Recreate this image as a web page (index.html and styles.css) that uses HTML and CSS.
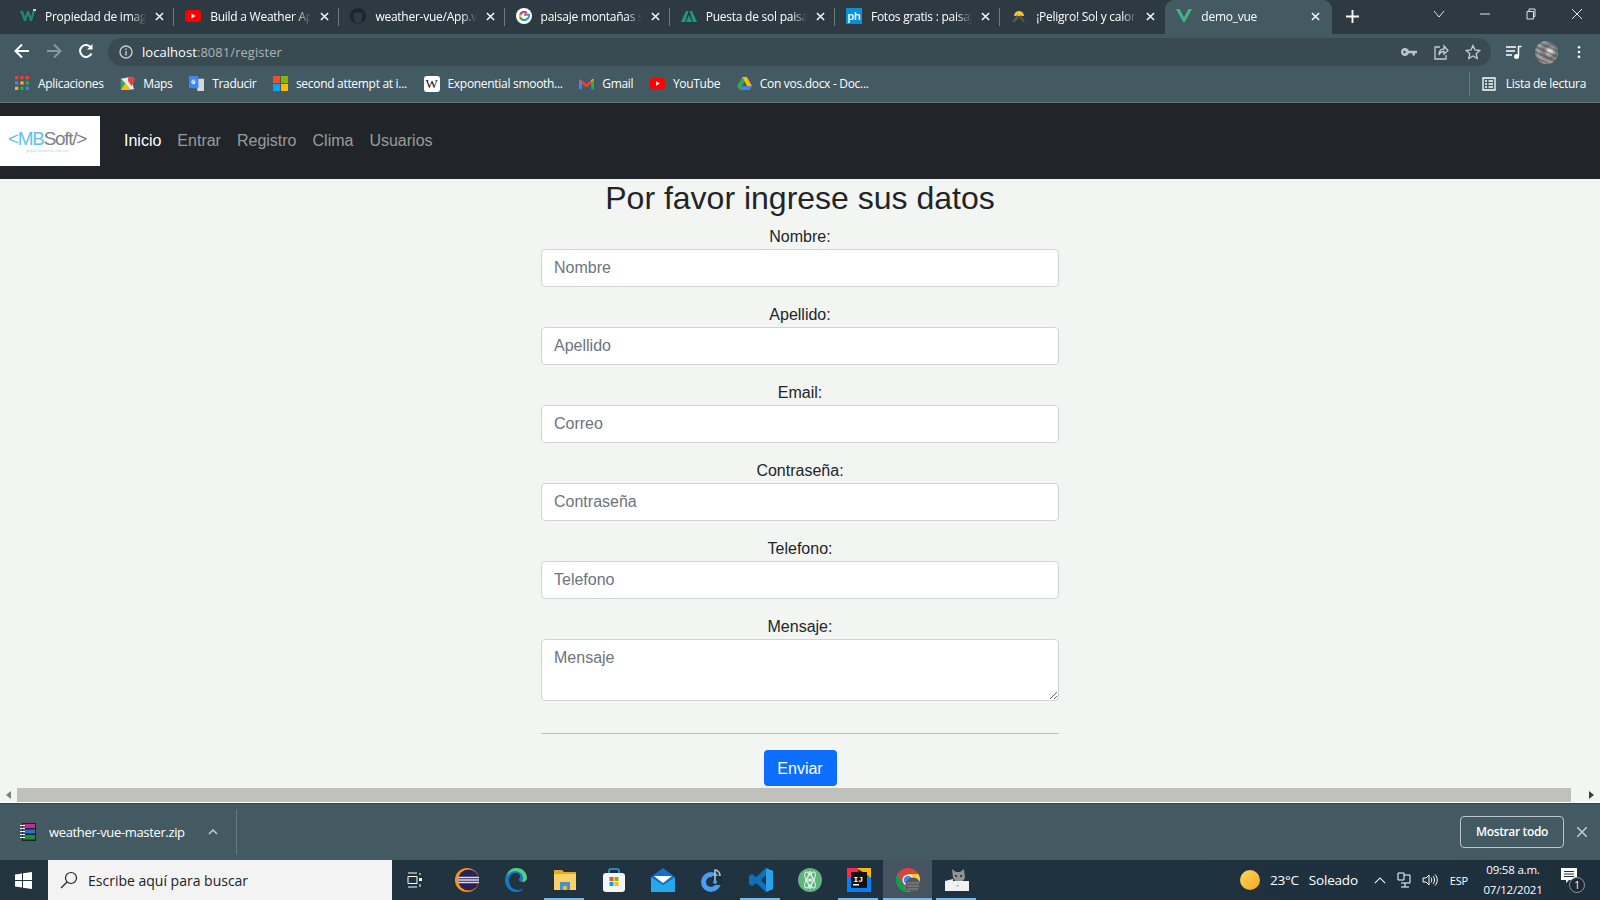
FILE: index.html
```html
<!DOCTYPE html>
<html lang="es">
<head>
    <meta charset="UTF-8">
    <title>demo_vue</title>
    <link rel="stylesheet" href="styles.css">
</head>
<body>
<div class="screen">
    <!-- Tabs -->
    <div class="tabstrip">
        <div class="tab">
            <svg class="favicon" viewBox="0 0 16 16"><path d="M0 3h3l2 6 2-6h2l2 6 1.500-6H15l-3 10H10L8 7l-2 6H4z" fill="#1c8a6e"/><path d="M13 1h3v2h-3z" fill="#ccc"/></svg>
            <span class="tab-title">Propiedad de imagen</span>
            <svg class="tab-close" viewBox="0 0 10 10"><path d="M1 1l8 8M9 1l-8 8"/></svg>
        </div>
        <div class="tab">
            <svg class="favicon" viewBox="0 0 16 16"><rect y="2" width="16" height="12" rx="3" fill="#f00"/><path d="M6.500 5.500v5l4-2.500z" fill="#fff"/></svg>
            <span class="tab-title">Build a Weather App</span>
            <svg class="tab-close" viewBox="0 0 10 10"><path d="M1 1l8 8M9 1l-8 8"/></svg>
        </div>
        <div class="tab">
            <svg class="favicon" viewBox="0 0 16 16"><circle cx="8" cy="8" r="8" fill="#1d262b"/><path d="M5 15v-3L3.500 9.500V6L5 4.500h6L12.500 6v3.500L11 12v3z" fill="#2d3a41"/></svg>
            <span class="tab-title">weather-vue/App.vue</span>
            <svg class="tab-close" viewBox="0 0 10 10"><path d="M1 1l8 8M9 1l-8 8"/></svg>
        </div>
        <div class="tab">
            <svg class="favicon" viewBox="0 0 16 16"><circle cx="8" cy="8" r="8" fill="#fff"/><path d="M8 6.800h5c.3 2.800-1.600 5.200-5 5.200a4 4 0 1 1 2.700-7" fill="none" stroke="#4285f4" stroke-width="2"/><path d="M4.300 6.500A4 4 0 0 1 10.700 5" fill="none" stroke="#ea4335" stroke-width="2"/><path d="M4.300 9.500A4 4 0 0 1 4.300 6.500" fill="none" stroke="#fbbc05" stroke-width="2"/><path d="M4.300 9.500A4 4 0 0 0 10.800 11" fill="none" stroke="#34a853" stroke-width="2"/></svg>
            <span class="tab-title">paisaje montañas sol</span>
            <svg class="tab-close" viewBox="0 0 10 10"><path d="M1 1l8 8M9 1l-8 8"/></svg>
        </div>
        <div class="tab">
            <svg class="favicon" viewBox="0 0 16 16"><path d="M0 14L5 3h2.500L4 14zM5 14l3-7 3 7zM8.500 3H11l5 11h-4z" fill="#1c9a86"/></svg>
            <span class="tab-title">Puesta de sol paisaje</span>
            <svg class="tab-close" viewBox="0 0 10 10"><path d="M1 1l8 8M9 1l-8 8"/></svg>
        </div>
        <div class="tab">
            <span class="favicon fav-ph">ph</span>
            <span class="tab-title">Fotos gratis : paisaje</span>
            <svg class="tab-close" viewBox="0 0 10 10"><path d="M1 1l8 8M9 1l-8 8"/></svg>
        </div>
        <div class="tab">
            <svg class="favicon" viewBox="0 0 16 16"><path d="M3 8a5 5 0 0 1 10 0z" fill="#f2c230"/><path d="M1 14l5-7 2 2 2-2 4 7h-2L9 10l-2 1-3 3z" fill="#5c5648"/></svg>
            <span class="tab-title">¡Peligro! Sol y calor</span>
            <svg class="tab-close" viewBox="0 0 10 10"><path d="M1 1l8 8M9 1l-8 8"/></svg>
        </div>
        <div class="tab tab-active">
            <svg class="favicon" viewBox="0 0 16 16"><path d="M0 1h3.500L8 9.500 12.500 1H16L8 15z" fill="#41b883"/></svg>
            <span class="tab-title">demo_vue</span>
            <svg class="tab-close" viewBox="0 0 10 10"><path d="M1 1l8 8M9 1l-8 8"/></svg>
        </div>
        <svg class="new-tab" viewBox="0 0 14 14"><path d="M7 0v14M0 7h14"/></svg>
        <div class="window-controls">
            <svg viewBox="0 0 12 12"><path d="M1 3l5 6 5-6"/></svg>
            <svg viewBox="0 0 12 12"><path d="M1 6h10"/></svg>
            <svg viewBox="0 0 12 12"><path d="M2 3.500h6.500V11H2zM4 3.500V1h6v7.500H8.500"/></svg>
            <svg viewBox="0 0 12 12"><path d="M1 1l10 10M11 1L1 11"/></svg>
        </div>
    </div>

    <!-- Toolbar -->
    <div class="toolbar">
        <svg class="nav-btn" viewBox="0 0 16 16"><path d="M15 8H2M8 1.500L1.500 8 8 14.500"/></svg>
        <svg class="nav-btn nav-btn-off" viewBox="0 0 16 16"><path d="M1 8h13M8 1.500L14.500 8 8 14.500"/></svg>
        <svg class="nav-btn" viewBox="0 0 16 16"><path d="M13.500 10.500A6 6 0 1 1 13 4.500"/><path class="solid" d="M14.500 1v5.500H9z"/></svg>
        <div class="omnibox">
            <svg class="info-icon" viewBox="0 0 14 14"><circle cx="7" cy="7" r="6"/><path d="M7 6v4.500M7 3.500v1.500"/></svg>
            <span class="url">localhost<span class="url-dim">:8081/register</span></span>
            <div class="omni-icons">
                <svg viewBox="0 0 16 16"><path fill="#bcc4c8" fill-rule="evenodd" d="M4 4a4 4 0 0 1 3.800 2.800H16V9.200h-2V11.500h-2.500V9.200H7.800A4 4 0 1 1 4 4zm-.5 2.800a1.200 1.200 0 1 0 0 2.400 1.200 1.200 0 0 0 0-2.400z"/></svg>
                <svg viewBox="0 0 16 16" class="line-icon"><path d="M7 3H2v12h11v-4"/><path d="M6 11c0-4 2-6 5-6V2l4 4.500L11 10V7.500c-2 0-4 1-5 3.500z"/></svg>
                <svg viewBox="0 0 16 16" class="line-icon"><path d="M8 1.500l2 4.500 4.800.5-3.600 3.200 1 4.800L8 12l-4.200 2.500 1-4.800L1.200 6.500 6 6z"/></svg>
            </div>
        </div>
        <svg class="tool-icon" viewBox="0 0 16 16"><path d="M0 3h10M0 7h9M0 11h6" stroke="#fff" stroke-width="1.500"/><path d="M12.500 2v10M12.500 2.500H15.500" stroke="#fff" stroke-width="1.500"/><circle cx="10.500" cy="12.500" r="2.500" fill="#fff"/></svg>
        <div class="avatar"></div>
        <svg class="tool-dots" viewBox="0 0 4 16"><circle cx="2" cy="2.500" r="1.500"/><circle cx="2" cy="8" r="1.500"/><circle cx="2" cy="13.500" r="1.500"/></svg>
    </div>

    <!-- Bookmarks -->
    <div class="bookmarks">
        <div class="bookmark">
            <svg viewBox="0 0 14 14" class="bm-icon"><path fill="#ea4335" d="M0 0h3v3H0zM5 0h3v3H5zM10 0h3v3h-3z"/><path fill="#4285f4" d="M0 5h3v3H0z"/><path fill="#fbbc05" d="M5 5h3v3H5z"/><path fill="#34a853" d="M10 5h3v3h-3z"/><path fill="#fbbc05" d="M0 10h3v3H0z"/><path fill="#34a853" d="M5 10h3v3H5z"/><path fill="#4285f4" d="M10 10h3v3h-3z"/></svg>
            <span>Aplicaciones</span>
        </div>
        <div class="bookmark">
            <svg viewBox="0 0 16 16" class="bm-icon"><path fill="#e8eaed" d="M1 3l10-2 4 13-14 1z"/><path fill="#34a853" d="M1 3l5 5-5 7z"/><path fill="#fbbc05" d="M6 8l6 7H1z"/><circle cx="12" cy="4" r="3.500" fill="#ea4335"/><path fill="#ea4335" d="M9.500 6h5L12 11z"/></svg>
            <span>Maps</span>
        </div>
        <div class="bookmark">
            <svg viewBox="0 0 16 16" class="bm-icon"><path fill="#d5d8da" d="M7 3h9v13H9z"/><rect width="10" height="13" rx="1" fill="#4285f4"/><path d="M7 6H4.500v1.500H6.500A2 2 0 1 1 6 4.500" fill="none" stroke="#fff"/></svg>
            <span>Traducir</span>
        </div>
        <div class="bookmark">
            <svg viewBox="0 0 16 16" class="bm-icon"><path fill="#f25022" d="M0 0h7.500v7.500H0z"/><path fill="#7fba00" d="M8.500 0H16v7.500H8.500z"/><path fill="#00a4ef" d="M0 8.500h7.500V16H0z"/><path fill="#ffb900" d="M8.500 8.500H16V16H8.500z"/></svg>
            <span>second attempt at i...</span>
        </div>
        <div class="bookmark">
            <span class="fav-wiki">W</span>
            <span>Exponential smooth...</span>
        </div>
        <div class="bookmark">
            <svg viewBox="0 0 16 14" class="bm-icon"><path fill="#ea4335" d="M1 2l7 5.500L15 2v4L8 11 1 6z"/><path fill="#4285f4" d="M0 3l3 2v8H1a1 1 0 0 1-1-1z"/><path fill="#34a853" d="M16 3l-3 2v8h2a1 1 0 0 0 1-1z"/><path fill="#fbbc05" d="M13 3.500l2-1.500 1 1-3 2.500z"/></svg>
            <span>Gmail</span>
        </div>
        <div class="bookmark">
            <svg viewBox="0 0 16 16" class="bm-icon"><rect y="2" width="16" height="12" rx="3" fill="#f00"/><path d="M6.500 5.500v5l4-2.500z" fill="#fff"/></svg>
            <span>YouTube</span>
        </div>
        <div class="bookmark">
            <svg viewBox="0 0 16 14" class="bm-icon"><path fill="#fbbc05" d="M5.500 0h5L16 10h-5z"/><path fill="#34a853" d="M5.500 0L8 5 3 14 0 10z"/><path fill="#4285f4" d="M3 14l2.500-4H16l-2.500 4z"/></svg>
            <span>Con vos.docx - Doc...</span>
        </div>
        <div class="reading-list">
            <svg viewBox="0 0 14 14" class="line-icon"><path d="M1 1h12v12H1zM3 4h2M6.500 4H11M3 7h2M6.500 7H11M3 10h2M6.500 10H11"/></svg>
            <span>Lista de lectura</span>
        </div>
    </div>

    <!-- Navbar -->
    <nav class="navbar">
        <div class="brand">
            <div class="brand-name"><span class="brand-blue">&lt;MB</span>Soft/&gt;</div>
            <div class="brand-sub">global business concept</div>
        </div>
        <a class="nav-link nav-link-active">Inicio</a>
        <a class="nav-link">Entrar</a>
        <a class="nav-link">Registro</a>
        <a class="nav-link">Clima</a>
        <a class="nav-link">Usuarios</a>
    </nav>

    <!-- Register form -->
    <main class="page">
        <form class="register-form">
            <h2>Por favor ingrese sus datos</h2>
            <div class="field">
                <label>Nombre:</label>
                <input type="text" class="form-control" placeholder="Nombre">
            </div>
            <div class="field">
                <label>Apellido:</label>
                <input type="text" class="form-control" placeholder="Apellido">
            </div>
            <div class="field">
                <label>Email:</label>
                <input type="text" class="form-control" placeholder="Correo">
            </div>
            <div class="field">
                <label>Contraseña:</label>
                <input type="text" class="form-control" placeholder="Contraseña">
            </div>
            <div class="field">
                <label>Telefono:</label>
                <input type="text" class="form-control" placeholder="Telefono">
            </div>
            <div class="field">
                <label>Mensaje:</label>
                <textarea class="form-control" rows="2" placeholder="Mensaje"></textarea>
            </div>
            <hr>
            <button type="button" class="btn-send">Enviar</button>
        </form>
    </main>

    <!-- Horizontal scrollbar -->
    <div class="scrollbar">
        <span class="arrow-left"></span>
        <div class="thumb"></div>
        <span class="arrow-right"></span>
    </div>

    <!-- Download bar -->
    <div class="downloads">
        <div class="download-item">
            <svg class="zip-icon" viewBox="0 0 18 18"><path fill="#222" d="M3 0h14v18H3z"/><path fill="#c2308a" d="M4 1h12v4H4z"/><path fill="#2d6fc4" d="M4 6.500h12v4H4z"/><path fill="#1e8a4a" d="M4 12h12v4.500H4z"/><path fill="#eee" d="M1 2h5v1H1zM1 5h5v1H1zM1 8h5v1H1zM1 11h5v1H1zM1 14h5v1H1z"/></svg>
            <span>weather-vue-master.zip</span>
            <svg class="chevron" viewBox="0 0 10 6"><path d="M1 5l4-4 4 4"/></svg>
        </div>
        <button type="button" class="btn-show-all">Mostrar todo</button>
        <svg class="download-close" viewBox="0 0 10 10"><path d="M0 0l10 10M10 0L0 10"/></svg>
    </div>

    <!-- Windows taskbar -->
    <div class="taskbar">
        <svg class="start" viewBox="0 0 17 17"><path fill="#fff" d="M0 2.400L7 1.400v6.600H0zM8 1.300L17 0v8H8zM0 9h7v6.600L0 14.600zM8 9h9v8l-9-1.300z"/></svg>
        <div class="search">
            <svg viewBox="0 0 18 18"><circle cx="11" cy="7" r="5.500"/><path d="M7 11l-6 6"/></svg>
            <span>Escribe aquí para buscar</span>
        </div>
        <svg class="task-view" viewBox="0 0 16 16"><path d="M1 1h9M1 15h9M1 4.500h9v7H1zM13 1v2M13 12v3"/><rect x="12" y="6" width="3" height="3" fill="#fff" stroke="none"/></svg>
        <div class="apps">
            <div class="app">
                <svg viewBox="0 0 24 24"><circle cx="12" cy="12" r="12" fill="#f7941e"/><circle cx="13.500" cy="12" r="10.500" fill="#2c2255"/><path d="M3 9.500h21M3 12h21M3 14.500h21" stroke="#dcd8ef" stroke-width="1.300"/></svg>
            </div>
            <div class="app">
                <svg viewBox="0 0 24 24"><path fill="#1b76c4" d="M1 12C1 5 6 0 12 0c7 0 11 5 11 10 0 2-2 4-5 4-2 0-3-1-3-2 0-2 1-2 1-4s-2-3-4-3C7 5 5 9 5 13c0 5 4 9 9 9 3 0 6-1 7-3-2 3-5 5-9 5C6 24 1 19 1 12z"/><path fill="#52d17c" d="M12 0c7 0 11 5 11 10 0 2-2 4-5 4 1-1 1-3 1-4 0-4-4-7-8-7-3 0-6 2-8 5 1-5 5-8 9-8z"/></svg>
            </div>
            <div class="app app-open">
                <svg viewBox="0 0 24 24"><path fill="#e5a823" d="M1 2h8l2 2h12v18H1z"/><path fill="#fad267" d="M1 6h22v16H1z"/><path fill="#4a90c8" d="M7 14h10v8h-3v-4h-4v4H7z"/><path fill="#e8b93f" d="M10 18h4v4h-4z"/></svg>
            </div>
            <div class="app">
                <svg viewBox="0 0 24 24"><path fill="none" stroke="#2aa6e0" stroke-width="1.600" d="M7 6V3a2 2 0 0 1 2-2h6a2 2 0 0 1 2 2v3"/><rect x="1" y="5" width="22" height="19" rx="3" fill="#f5f5f5"/><path fill="#f25022" d="M7.500 9h4v4h-4z"/><path fill="#7fba00" d="M12.500 9h4v4h-4z"/><path fill="#00a4ef" d="M7.500 14h4v4h-4z"/><path fill="#ffb900" d="M12.500 14h4v4h-4z"/></svg>
            </div>
            <div class="app">
                <svg viewBox="0 0 24 24"><path fill="#1171c4" d="M0 9l12-9 12 9-12 8z"/><path fill="#fff" d="M3 8h18l-9 7z"/><path fill="#26a9ea" d="M0 9l12 8 12-8v15H0z"/></svg>
            </div>
            <div class="app">
                <svg viewBox="0 0 24 24"><circle cx="11" cy="14" r="7.500" fill="none" stroke="#4a9df0" stroke-width="5"/><rect x="12" y="8" width="11" height="9" fill="#1e2f3a"/><path d="M15 14V2c3 0 5 3 5 6" fill="none" stroke="#b9c9d6" stroke-width="1.500"/><circle cx="15" cy="14" r="2" fill="#4a9df0"/></svg>
            </div>
            <div class="app app-open">
                <svg viewBox="0 0 24 24"><path fill="#0f6fb8" d="M17 0l7 3v18l-7 3-10-9-4 3-3-2v-8l3-2 4 3zm0 7l-5 5 5 5z"/><path fill="#28a1e8" d="M17 0l7 3v18l-7 3z"/></svg>
            </div>
            <div class="app">
                <svg viewBox="0 0 24 24"><circle cx="12" cy="12" r="12" fill="#5fb57d"/><g fill="none" stroke="#e6f4ea" stroke-width="1"><ellipse cx="12" cy="12" rx="9" ry="3.500" transform="rotate(60 12 12)"/><ellipse cx="12" cy="12" rx="9" ry="3.500" transform="rotate(-60 12 12)"/><path d="M12 3c-3 4-3 13 0 18 3-5 3-14 0-18z"/></g><circle cx="12" cy="12" r="1.500" fill="#fff"/></svg>
            </div>
            <div class="app app-open">
                <svg viewBox="0 0 24 24"><path fill="#fe2857" d="M0 0h14L0 14z"/><path fill="#087cfa" d="M0 10v14h24V8z"/><path fill="#fdb60d" d="M10 0h14v10z"/><rect x="4" y="4" width="16" height="16" fill="#111"/><rect x="6" y="16" width="6" height="1.500" fill="#fff"/><text x="6.500" y="13.500" class="ij-text">IJ</text></svg>
            </div>
            <div class="app app-open app-active">
                <svg viewBox="0 0 24 24"><circle cx="12" cy="12" r="12" fill="#db4437"/><path fill="#0f9d58" d="M12 24A12 12 0 0 1 1.600 6l6 11z"/><path fill="#ffcd40" d="M12 6h10.400A12 12 0 0 1 12 24l5-8z"/><circle cx="12" cy="12" r="5.500" fill="#fff"/><circle cx="12" cy="12" r="4.300" fill="#4285f4"/><circle cx="17" cy="17" r="7.500" fill="#55595c"/><path d="M11 15h12M11 18h12M12 21h10" stroke="#8d9092"/></svg>
            </div>
            <div class="app app-open">
                <svg viewBox="0 0 24 24"><path fill="#8f9493" d="M8 10L7 1l4 3h4l4-3 1 9-3 4h-6z"/><circle cx="11" cy="8" r="1" fill="#222"/><circle cx="16" cy="8" r="1" fill="#222"/><path fill="#f2f2f2" d="M0 13l8-2v2h16v10H0z"/><rect x="11" y="17" width="3" height="1.500" fill="#9cc"/></svg>
            </div>
        </div>
        <div class="tray">
            <div class="weather">
                <div class="sun"></div>
                <span>23°C</span>
                <span>Soleado</span>
            </div>
            <svg class="tray-caret" viewBox="0 0 14 8"><path d="M1 7l6-6 6 6"/></svg>
            <svg class="tray-icon" viewBox="0 0 16 16"><path d="M2 1h6v7H2zM8 3h6v8H5M9 11v4M5 15h8"/></svg>
            <svg class="tray-icon" viewBox="0 0 16 16"><path d="M1 6h3l3-3v10l-3-3H1zM9 5.500c1 1.500 1 3.500 0 5M11 4c2 2 2 6 0 8M13 2.500c3 3 3 8 0 11"/></svg>
            <span class="lang">ESP</span>
            <div class="clock"><span>09:58 a.m.</span><span>07/12/2021</span></div>
            <div class="notif">
                <svg viewBox="0 0 16 16"><path fill="#fff" d="M0 0h16v12H8l-3 3v-3H0z"/><path d="M3 3.500h10M3 6h10M3 8.500h10" stroke="#1f323d"/></svg>
                <span class="notif-badge">1</span>
            </div>
        </div>
    </div>
</div>
</body>
</html>
```

FILE: styles.css
```css
* {
    box-sizing: border-box;
}
body {
    margin: 0;
    font-family: "Liberation Sans", Arial, sans-serif;
    color: #212529;
    overflow: hidden;
}
svg {
    display: block;
    flex: none;
}
.screen {
    width: 1600px;
    height: 900px;
    display: flex;
    flex-direction: column;
    overflow: hidden;
    background: #f3f5f2;
}

/* Chrome tabs */
.tabstrip {
    height: 34px;
    flex: none;
    display: flex;
    padding-left: 9px;
    background: #2d3a41;
    font-family: "Open Sans", sans-serif;
    font-size: 12px;
    letter-spacing: -0.25px;
    color: #fff;
}
.tab {
    width: 165.200px;
    height: 34px;
    padding: 0 10px 2px 11px;
    display: flex;
    align-items: center;
    gap: 9px;
    position: relative;
}
.tab::after {
    content: "";
    position: absolute;
    right: 0;
    top: 8px;
    height: 18px;
    width: 1px;
    background: #6b7a81;
}
.tab:nth-child(7)::after,
.tab-active::after {
    display: none;
}
.tab-active {
    width: 167px;
    padding-right: 12px;
    background: #435a63;
    border-radius: 9px 9px 0 0;
}
.favicon {
    width: 16px;
    height: 16px;
    flex: none;
}
.fav-ph {
    background: #0d8fd8;
    font-size: 11px;
    font-weight: 600;
    line-height: 16px;
    text-align: center;
}
.tab-title {
    flex: 1;
    white-space: nowrap;
    overflow: hidden;
    -webkit-mask-image: linear-gradient(to right, #000 85%, transparent);
    mask-image: linear-gradient(to right, #000 85%, transparent);
}
.tab-close {
    width: 9px;
    height: 9px;
    fill: none;
    stroke: #fff;
    stroke-width: 1.600;
}
.new-tab {
    width: 13px;
    height: 13px;
    margin: 10px 0 0 14px;
    fill: none;
    stroke: #fff;
    stroke-width: 2;
}
.window-controls {
    margin-left: auto;
    display: flex;
    gap: 34px;
    padding: 8px 17px 0 0;
}
.window-controls svg {
    width: 12px;
    height: 12px;
    fill: none;
    stroke: #dfe3e5;
}

/* Address bar */
.toolbar {
    height: 33px;
    flex: none;
    display: flex;
    align-items: center;
    padding-left: 14px;
    background: #435a63;
    color: #fff;
}
.nav-btn {
    width: 16px;
    height: 16px;
    margin-right: 16px;
    fill: none;
    stroke: #fff;
    stroke-width: 2;
}
.nav-btn-off {
    stroke: #8a989e;
}
.nav-btn .solid {
    fill: #fff;
    stroke: none;
}
.omnibox {
    width: 1383px;
    height: 28px;
    margin: 3px 0 0 -2px;
    padding: 0 10px 0 11px;
    display: flex;
    align-items: center;
    border-radius: 14px;
    background: #3a4a51;
    font-family: "Open Sans", sans-serif;
    font-size: 13px;
    letter-spacing: 0.05px;
}
.info-icon {
    width: 14px;
    height: 14px;
    margin-right: 9px;
    fill: none;
    stroke: #c6ccd0;
    stroke-width: 1.400;
}
.url-dim {
    color: #aab4b9;
}
.omni-icons {
    margin-left: auto;
    display: flex;
    gap: 16px;
}
.omni-icons svg {
    width: 16px;
    height: 16px;
}
.line-icon {
    fill: none;
    stroke: #c6ccd0;
    stroke-width: 1.300;
}
.tool-icon {
    width: 16px;
    height: 16px;
    margin: 3px 0 0 15px;
}
.avatar {
    width: 23px;
    height: 23px;
    margin: 3px 0 0 13px;
    border-radius: 50%;
    background:
        repeating-linear-gradient(25deg, rgba(40, 40, 40, 0.35) 0 2px, transparent 2px 5px),
        radial-gradient(circle at 65% 45%, #dcdcdc 8%, #777 32%, #a5a5a5 62%, #4a4a4a);
}
.tool-dots {
    width: 4px;
    height: 14px;
    margin: 3px 0 0 19px;
    fill: #fff;
}

/* Bookmarks bar */
.bookmarks {
    height: 35px;
    flex: none;
    display: flex;
    align-items: center;
    padding: 0 0 2px 15px;
    background: #435a63;
    font-family: "Open Sans", sans-serif;
    font-size: 12px;
    letter-spacing: -0.3px;
    color: #fff;
}
.bookmark {
    display: flex;
    align-items: center;
    gap: 8px;
    margin-right: 16.600px;
    white-space: nowrap;
}
.bm-icon {
    width: 15px;
    height: 15px;
}
.fav-wiki {
    width: 16px;
    height: 16px;
    border-radius: 3px;
    background: #fff;
    color: #111;
    font-family: "Liberation Serif", serif;
    font-size: 13px;
    line-height: 16px;
    text-align: center;
}
.reading-list {
    margin-left: auto;
    padding-left: 12px;
    padding-right: 14px;
    display: flex;
    align-items: center;
    gap: 10px;
    height: 24px;
    border-left: 1px solid #6b7a81;
}
.reading-list svg {
    width: 14px;
    height: 14px;
    stroke: #fff;
}

/* Navbar */
.navbar {
    height: 77px;
    flex: none;
    display: flex;
    align-items: center;
    border-top: 1px solid #62757d;
    background: #212529;
}
.brand {
    width: 100px;
    height: 50px;
    margin-right: 16px;
    padding: 13px 6px 0 0;
    background: #fff;
    text-align: center;
}
.brand-name {
    font-size: 19px;
    line-height: 20px;
    letter-spacing: -1.300px;
    color: #7f8284;
}
.brand-blue {
    color: #5fc1ee;
}
.brand-sub {
    font-size: 4px;
    line-height: 4px;
    color: #a6dbf3;
}
.nav-link {
    padding: 8px;
    font-size: 16px;
    line-height: 24px;
    color: rgba(255, 255, 255, 0.55);
}
.nav-link-active {
    color: #fff;
}

/* Form */
.page {
    flex: 1;
    min-height: 0;
    overflow: hidden;
}
.register-form {
    width: 518px;
    margin: 0 auto;
    text-align: center;
}
.register-form h2 {
    margin: 0 0 8px;
    font-size: 32px;
    font-weight: 500;
    line-height: 38.400px;
}
.field {
    margin-bottom: 16px;
}
.field label {
    display: block;
    font-size: 16px;
    line-height: 24px;
}
.form-control {
    display: block;
    width: 100%;
    padding: 6px 12px;
    border: 1px solid #ced4da;
    border-radius: 4px;
    background: #fff;
    font-family: "Liberation Sans", Arial, sans-serif;
    font-size: 16px;
    line-height: 24px;
    color: #212529;
}
.form-control::placeholder {
    color: #6c757d;
}
textarea.form-control {
    height: 62px;
    resize: vertical;
}
.register-form hr {
    height: 1px;
    margin: 32px 0 16px;
    border: 0;
    background: #c0c1bf;
}
.btn-send {
    width: 73px;
    height: 36px;
    padding: 2px 0 0;
    border: 0;
    border-radius: 4px;
    background: #0d6efd;
    font-family: "Liberation Sans", Arial, sans-serif;
    font-size: 16px;
    color: #fff;
}

/* Scrollbar */
.scrollbar {
    height: 15px;
    flex: none;
    display: flex;
    align-items: center;
    padding-bottom: 1px;
    border-bottom: 1px solid #fff;
    background: #f3f5f2;
}
.thumb {
    flex: 1;
    height: 14px;
    margin: 0 18px 0 17px;
    background: #c0c1bd;
}
.arrow-left,
.arrow-right {
    width: 0;
    height: 0;
    border-top: 4px solid transparent;
    border-bottom: 4px solid transparent;
}
.arrow-left {
    margin-left: 6px;
    margin-right: -11px;
    border-right: 5px solid #7d7f7c;
}
.arrow-right {
    margin-right: 6px;
    border-left: 5px solid #3c3f3d;
}

/* Download bar */
.downloads {
    height: 57px;
    flex: none;
    display: flex;
    align-items: center;
    border-top: 1px solid #34464e;
    background: #435a63;
    color: #fff;
}
.download-item {
    width: 237px;
    height: 44px;
    padding-left: 19px;
    display: flex;
    align-items: center;
    gap: 12px;
    border-right: 1px solid #6b7a81;
    font-family: "Open Sans", sans-serif;
    font-size: 13px;
    letter-spacing: -0.35px;
}
.zip-icon {
    width: 18px;
    height: 18px;
}
.chevron {
    width: 10px;
    height: 6px;
    margin-left: 11px;
    fill: none;
    stroke: #c6ccd0;
    stroke-width: 1.500;
}
.btn-show-all {
    width: 104px;
    height: 32px;
    margin-left: auto;
    padding: 0 0 2px;
    border: 1px solid #b9c3c7;
    border-radius: 4px;
    background: transparent;
    font-family: "Open Sans", sans-serif;
    font-size: 12px;
    font-weight: 600;
    letter-spacing: -0.35px;
    color: #fff;
}
.download-close {
    width: 10px;
    height: 10px;
    margin: 0 13px 0 13px;
    fill: none;
    stroke: #c6ccd0;
    stroke-width: 1.500;
}

/* Windows taskbar */
.taskbar {
    height: 40px;
    flex: none;
    display: flex;
    align-items: center;
    padding-left: 15px;
    background: linear-gradient(to right, #22343d, #1f3240 60%, #1e2f3c);
    color: #fff;
    font-family: "Open Sans", sans-serif;
}
.start {
    width: 17px;
    height: 17px;
}
.search {
    width: 344px;
    height: 40px;
    margin-left: 16px;
    padding-left: 12px;
    display: flex;
    align-items: center;
    gap: 10px;
    background: #f3f3f3;
    color: #222;
    font-size: 14px;
}
.search svg {
    width: 18px;
    height: 18px;
    fill: none;
    stroke: #222;
    stroke-width: 1.200;
}
.task-view {
    width: 16px;
    height: 16px;
    margin-left: 15px;
    fill: none;
    stroke: #fff;
}
.apps {
    display: flex;
    margin-left: 19px;
}
.app {
    width: 49px;
    height: 40px;
    display: flex;
    align-items: center;
    justify-content: center;
    position: relative;
}
.app svg {
    width: 24px;
    height: 24px;
}
.app-open::after {
    content: "";
    position: absolute;
    left: 4px;
    right: 5px;
    bottom: 0;
    height: 2px;
    background: #76b9ed;
}
.app-active {
    background: #45545e;
}
.app-active::after {
    left: 0;
    right: 0;
}
.ij-text {
    font-family: "Liberation Mono", monospace;
    font-size: 8px;
    font-weight: bold;
    fill: #fff;
}
.tray {
    margin-left: auto;
    margin-right: 12px;
    display: flex;
    align-items: center;
    font-size: 13px;
}
.weather {
    display: flex;
    align-items: center;
    gap: 10px;
    font-size: 13.500px;
    letter-spacing: -0.2px;
}
.sun {
    width: 20px;
    height: 20px;
    border-radius: 50%;
    background: linear-gradient(135deg, #ffd75a, #f5a623);
}
.tray-caret {
    width: 12px;
    height: 7px;
    margin-left: 16px;
    fill: none;
    stroke: #fff;
    stroke-width: 1.200;
}
.tray-icon {
    width: 16px;
    height: 16px;
    margin-left: 10px;
    fill: none;
    stroke: #fff;
}
.lang {
    margin-left: 12px;
    font-size: 11px;
    letter-spacing: -0.2px;
}
.clock {
    width: 80px;
    margin-left: 5px;
    display: flex;
    flex-direction: column;
    align-items: center;
    gap: 2px;
    font-size: 11.500px;
    letter-spacing: -0.2px;
    line-height: 18px;
}
.notif {
    width: 32px;
    height: 24px;
    margin-left: 3px;
    padding-left: 5px;
    position: relative;
}
.notif svg {
    width: 16px;
    height: 16px;
}
.notif-badge {
    position: absolute;
    left: 13px;
    top: 9px;
    width: 16px;
    height: 16px;
    border: 1px solid #8b9299;
    border-radius: 50%;
    background: #1f2a30;
    font-size: 10px;
    line-height: 14px;
    text-align: center;
}
```
